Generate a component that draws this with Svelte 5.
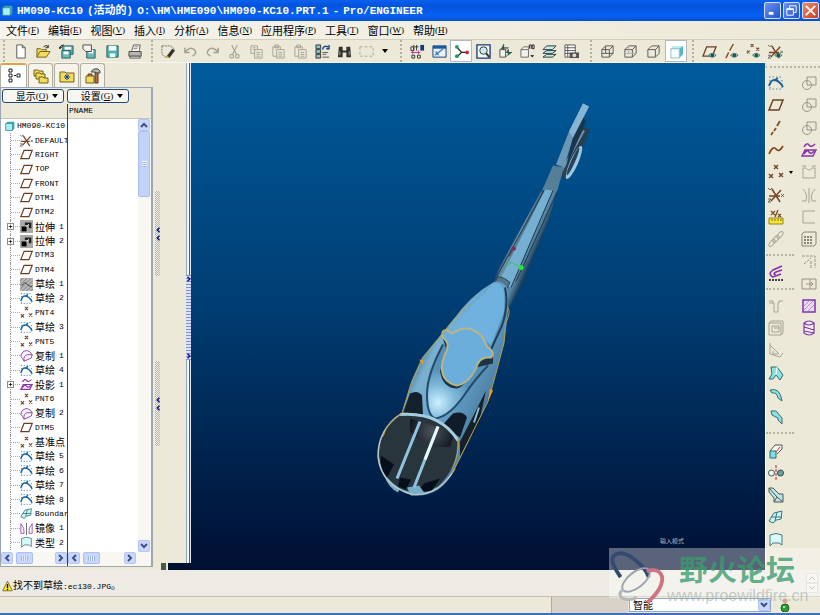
<script>
	const menus = [
		['文件', 'F'],
		['编辑', 'E'],
		['视图', 'V'],
		['插入', 'I'],
		['分析', 'A'],
		['信息', 'N'],
		['应用程序', 'P'],
		['工具', 'T'],
		['窗口', 'W'],
		['帮助', 'H']
	];

	const cube = '<path d="M2 6h8v8H2zM2 6l4-4h8l-4 4M14 2v8l-4 4" fill="none" stroke="#555"/>';
	const eye = '<path d="M7 12q4-4 8 0q-4 4-8 0z" fill="#cde" stroke="#476"/><circle cx="11" cy="12" r="2" fill="#175a4a"/>';
	const paste = '<path d="M2 3h8v10H2zM4 1h4v3H4z"/><path d="M6 6h8v9H6z" fill="#ece9d8"/><path d="M8 9h4M8 11h4M8 13h4"/>';
	const points = '<path d="M6 1l4 4M10 1L6 5M1 10l4 4M5 10l-4 4M11 9l4 4M15 9l-4 4" stroke="#7a4a28" stroke-width="1.5"/>';
	const plane = '<path d="M5 3h10l-4 10H1z" fill="none" stroke="#6d3f22" stroke-width="1.4"/>';
	const csys = '<path d="M3 14L13 3M4 2l8 13M1 9h11" stroke="#774426" stroke-width="1.5"/><path d="M0 1l2 2 2-2M13 7l3 3m0-3l-3 3M0 12h3l-3 3h3" fill="none" stroke="#555" stroke-width=".9"/>';
	const sketch = '<path d="M1 2h14M1 14h14M2 5v8M14 5v8" stroke="#4a8cc4" stroke-width="1.2" stroke-dasharray="1.500 2"/><path d="M1 11q2-6 5-6 5 0 9 7M7 5l3-2" fill="none" stroke="#15629c" stroke-width="1.8"/>';
	const merge = '<path d="M6 2h9v8H6z" fill="none"/><circle cx="6" cy="10" r="4.500" fill="none"/>';
	const project = '<path d="M3 5q3-5 5-2t6-1M4 8h11l-3 6H1zM3 12q3-5 5-2t5-1" fill="none" stroke="#8b2fa8" stroke-width="1.4"/>';
	const copy = '<path d="M1 9Q2 2 9 2q4 1 6 5l-1 4-9 4q-2-4-4-6zM5 15Q4 8 9 7l6 0" fill="#faf4fc" stroke="#8c4ba4" stroke-width="1.2"/>';
	const folder = 'fill="#f4dc58" stroke="#6d6020"';

	const icons = {
		new: '<path d="M4 1h6l3 3v11H4z" fill="#fff" stroke="#555"/><path d="M10 1v3h3" fill="none" stroke="#555"/>',
		open: `<path d="M1 14V5h4l1 1h5v3" ${folder}/><path d="M1 14l3-6h11l-4 6z" ${folder}/><path d="M8 3q3-3 5 0m0-2v3h-3" fill="none" stroke="#222"/>`,
		save: '<path d="M2 2h12v12H2z" fill="#56aeb0" stroke="#2b5c60"/><path d="M4 2h8v5H4z" fill="#f4ffff"/><path d="M5 10h6v4H5z" fill="#dff"/>',
		backup: '<path d="M4 2h11v9H4z" fill="#56aeb0" stroke="#2b5c60"/><path d="M6 3h7v3H6z" fill="#fff"/><path d="M3 7h9v8H3z" fill="#66babb" stroke="#2b5c60"/><path d="M5 8h5v3H5z" fill="#fff"/><path d="M1 5q0-4 4-4M0 3l1 2 2-2" fill="none" stroke="#111"/>',
		saveas: '<path d="M5 6h9v9H5z" fill="#66babb" stroke="#2b5c60"/><path d="M7 6h5v4H7z" fill="#fff"/><path d="M1 1h9v7H4L1 5z" fill="#f4f4ee" stroke="#444"/>',
		print: '<path d="M4 7l2-6h7l-1 6" fill="#fff" stroke="#555"/><path d="M1 8h13v5H1z" fill="#b8b6ac" stroke="#444"/><path d="M2 13h11v2H2z" fill="#eee" stroke="#555"/><path d="M7 3h4M6 5h4" stroke="#777"/>',
		redraw: '<path d="M1 2h9l4 3M1 2v9l4 3" fill="none" stroke="#666" stroke-dasharray="2 1"/><path d="M6 13l6-8 3 2-6 8z" fill="#333"/><path d="M5 15l1-3 3 2z" fill="#b7a91e"/>',
		undo: '<path d="M2 4v5h5M2 9q5-7 10-3 4 4-2 7" fill="none" stroke="#a5a295" stroke-width="1.6"/>',
		redo: '<path d="M14 4v5H9M14 9Q9 2 4 6q-4 4 2 7" fill="none" stroke="#a5a295" stroke-width="1.6"/>',
		cut: '<g fill="none" stroke="#a5a295" stroke-width="1.2"><path d="M5 1l5 10M11 1L6 11"/><circle cx="5" cy="13" r="2"/><circle cx="11" cy="13" r="2"/></g>',
		copyclip: '<g fill="none" stroke="#a5a295"><path d="M2 2h7v8H2zM4 4h3M4 6h3"/><path d="M6 6h8v9H6z" fill="#ece9d8"/><path d="M8 9h4M8 11h4M8 13h4"/></g>',
		paste: `<g fill="none" stroke="#a5a295">${paste}</g>`,
		regen: '<path d="M1 1h5v4H1zM1 6h5v4H1zM1 11h5v4H1z" fill="#8cc6c8" stroke="#333"/><path d="M8 6q1-5 6-3m1-2v4h-3" fill="none" stroke="#1b4690" stroke-width="1.5"/><path d="M8 9h6M8 11h4M8 14h7" stroke="#555"/>',
		find: '<path d="M2 3h4v4h4V3h4l1 11h-5V9H6v5H1z" fill="#30302c"/><path d="M3 8v4M13 8v4" stroke="#aaa"/>',
		select: '<path d="M1 3h14v10H1z" fill="none" stroke="#aaa79b" stroke-dasharray="3 2"/>',
		dims: '<path d="M1 3h3v4H1zM4 1v6M7 1v6M5 3h4" fill="none" stroke="#333"/><path d="M11 1h4v6h-4z" fill="#123a78"/><path d="M1 9h10M3 7v4M9 7v4" stroke="#b33a8a"/><path d="M2 12h3v3H2zM8 12h3v3H8z" fill="none" stroke="#333"/>',
		sketchview: '<path d="M1 2h14v12H1z" fill="#e8f2fb" stroke="#123a78"/><path d="M1 2h14v3H1z" fill="#1d55a8"/><path d="M3 12l9-7M4 8l3 4" stroke="#3f7bb8" stroke-width="1.4"/>',
		spin: '<path d="M3 3l5 6-5 5M8 9h6" fill="none" stroke="#222" stroke-width="1.4"/><circle cx="3" cy="3" r="2" fill="#2a9c58"/><circle cx="3" cy="13" r="2" fill="#2a9c58"/><circle cx="14" cy="9" r="2" fill="#c22840"/>',
		zoom: '<path d="M1 1h14v14H1z" fill="#f8f8f8" stroke="#123a78" stroke-width="1.4"/><circle cx="8" cy="7" r="4" fill="#cde8ef" stroke="#333"/><path d="M11 10l3 4" stroke="#333" stroke-width="2"/>',
		orient: '<path d="M2 6h6v8H2zM2 6l3-2h6l-3 2M8 14l3-3" fill="#f3f3ea" stroke="#555"/><path d="M6 0v6l-2-2M6 6l2-2M15 9H9l2-3v6" fill="#1d5a4a" stroke="#1d5a4a"/>',
		views: '<path d="M1 6h8v8H1zM1 6l3-3h6L9 6" fill="#f3f3ea" stroke="#666"/><path d="M10 5V1h2v4M13 1h2v4h-2z" fill="none" stroke="#222"/><path d="M11 12h4l-2 2z"/>',
		layers: '<g fill="#baf0ee" stroke="#333"><path d="M1 14l4-3h10l-4 3z"/><path d="M1 10l4-3h10l-4 3z"/><path d="M1 6l4-4h10l-4 4z"/></g>',
		camera: '<path d="M1 1h11v13H1zM1 4h11M1 7h11M1 10h11M4 1v13" fill="#fff" stroke="#555"/><path d="M6 9h10v6H6z" fill="#555"/><circle cx="11" cy="12" r="2" fill="#ddd"/>',
		wire: cube + '<path d="M6 2v8H2M6 10h8" fill="none" stroke="#555"/>',
		hidden: cube + '<path d="M6 2v8H2M6 10h8" fill="none" stroke="#aaa"/>',
		nohidden: cube,
		shade: '<path d="M2 5l3-3h10v9l-4 4V5z" fill="#55b6c4"/><path d="M2 5l3-3h10l-4 3z" fill="#b9eef2"/><path d="M2 5h9v10H2z" fill="#f4ffff" stroke="#99b7bd"/>',
		planeeye: plane + eye,
		axiseye: '<path d="M10 0L6 7M5 9l-3 6" stroke="#8a4a22" stroke-width="1.5"/>' + eye,
		pointeye: '<path d="M5 0l3 3M8 0L5 3M1 7l3 3M4 7l-3 3M11 4l3 3M14 4l-3 3" stroke="#7a4a28" stroke-width="1.3"/>' + eye,
		csyseye: csys + eye,

		model: '<path d="M1 4l3-3h11v11l-3 3H1z" fill="#37a9b5"/><path d="M1 4h11v11H1z" fill="#9ff3f4" stroke="#40777c"/>',
		plane,
		csys,
		points,
		sketch,
		hiddensketch: '<path d="M0 0h16v16H0z" fill="#b8b8b8"/><path d="M0 4l4-4M0 9l9-9M0 14L14 0M3 16L16 3M8 16l8-8M13 16l3-3" stroke="#777"/><path d="M2 10q4-6 6-3t7 4" fill="none" stroke="#333"/>',
		extrude: '<path d="M0 0h16v16H0z" fill="#a9a9a5"/><path d="M2 8h6v6H2z" fill="#000"/><path d="M6 3h8v7h-3V6H6z" fill="#222"/><path d="M8 8l3-3" stroke="#fff"/>',
		copy,
		project,
		boundary: '<path d="M1 12L6 4l8-2-1 8q-5 0-8 4zM3 8h11M9 3L7 12" fill="#c9f5f3" stroke="#37787c"/>',
		mirror: '<path d="M1 2q5 5 4 12H1zM15 2q-5 5-4 12h4z" fill="#fbf3fb" stroke="#8c4ba4"/><path d="M8 1v15" stroke="#555"/>',
		style: '<path d="M2 3q6-3 12 0v10l-3-2H5l-3 3z" fill="#d7fafa" stroke="#4d7a80"/>',

		axis: '<path d="M12 1L9 6M8 8l-2 3M5 12l-2 3" stroke="#8a4a22" stroke-width="1.8"/>',
		curve: '<path d="M1 12q4-9 7-5t7-3" fill="none" stroke="#844016" stroke-width="1.6"/>',
		analysis: '<path d="M3 2l4 4m0-4L3 6M10 1L7 8M10 5l3 3m0-3l-3 3" stroke="#7a4a28" stroke-width="1.3"/><path d="M1 9h14v6H1z" fill="#f4e43c" stroke="#97861c"/><path d="M4 10v2M7 10v2M10 10v2M13 10v2" stroke="#786b10"/>',
		chain: '<g fill="none" stroke="#a5a295"><ellipse cx="4" cy="12" rx="2" ry="4" transform="rotate(40 4 12)"/><ellipse cx="8" cy="8" rx="2" ry="4" transform="rotate(40 8 8)"/><ellipse cx="12" cy="4" rx="2" ry="4" transform="rotate(40 12 4)"/></g>',
		magnet: '<path d="M14 1L5 5Q-1 9 5 12l8-3M14 5L8 7q-4 2 0 3" fill="none" stroke="#8b2fa8" stroke-width="1.5"/><path d="M1 15h14" stroke="#444" stroke-width="2" stroke-dasharray="2 1"/>',
		hole: '<path d="M1 3h4v2h1v9h4V5h1V3h4M1 5h4" fill="none" stroke="#a5a295"/>',
		shell: '<g fill="none" stroke="#a5a295"><path d="M1 3h12v12H1zM4 6h7v6H4zM6 8h5M1 3l2-2h12v12l-2 2"/></g>',
		rib: '<path d="M2 1v11l10 3M2 3l9 9M5 9v3h5M12 15l3-4" fill="none" stroke="#a5a295"/>',
		draft: '<path d="M3 2h6l6 8-3 5-4-5-3 4H1l3-5z" fill="#8be4e4" stroke="#376b70"/><path d="M9 2L8 10" stroke="#fff" fill="none"/>',
		round: '<path d="M2 3q10-3 12 11l-4-3Q9 5 4 6z" fill="#8be4e4" stroke="#376b70"/>',
		chamfer: '<path d="M3 2h5l6 7v6l-4-4V9L4 6z" fill="#8be4e4" stroke="#376b70"/>',
		extrudetool: '<path d="M2 8l5-6h7v4l-5 5" fill="#f5f5ee" stroke="#555"/><path d="M2 8h6v7H2z" fill="#7fe0e4" stroke="#236c74"/><path d="M8 9l4-5" stroke="#c33"/>',
		revolve: '<circle cx="3.500" cy="8" r="3" fill="#e2f8f6" stroke="#555"/><circle cx="12.500" cy="8" r="3" fill="#5da79f" stroke="#444"/><path d="M8 0v16" stroke="#c22" stroke-dasharray="3 1"/>',
		sweep: '<path d="M1 1h4l6 6h4v8H6v-4L1 5z" fill="#bbe6e8" stroke="#555"/><path d="M1 1l8 9M6 15l3-5 6 5" stroke="#555" fill="none"/>',
		merge: `<g stroke="#98958a">${merge}</g>`,
		trim: '<path d="M2 4h3q3 4 6 0h3v10H2zM1 2h4M11 2h4" fill="none" stroke="#a5a295"/>',
		mirroroff: '<path d="M2 2q5 5 3 12H1M14 2q-5 5-3 12h4M8 1v15" fill="none" stroke="#a5a295"/>',
		corner: '<path d="M14 2H2v12h12" fill="none" stroke="#a5a295"/>',
		pattern: '<path d="M1 3l2-2h12v12l-2 2H1z" fill="none" stroke="#888579"/><path d="M4 5v9M7 5v9M10 5v9" stroke="#888579" stroke-width="2" stroke-dasharray="2 1"/>',
		extend: '<path d="M1 3h13v12M10 15V8M3 11l7-6" fill="none" stroke="#98958a" stroke-dasharray="3 1"/>',
		offset: '<path d="M1 3h14v10H1zM9 3v10M5 8h7l-2-2m2 2l-2 2" fill="none" stroke="#98958a"/>',
		fill: '<path d="M2 2h12v12H2z" fill="#eadcf5" stroke="#7c35a6" stroke-width="1.5"/><path d="M3 8l5-5M3 12l9-9M7 13l6-6" stroke="#b48bd0"/>',
		helix: '<path d="M3 3q5-4 10 0v10q-5 4-10 0zM3 3q5 4 10 0M3 7l10 3M3 11l10 2" fill="#f5effa" stroke="#7c35a6" stroke-width="1.2"/>',

		tree: '<path d="M3 1h3v3H3zM3 6h3v3H3zM3 11h3v3H3zM11 6h3v3h-3z" fill="#fff" stroke="#222"/><path d="M8 7.500h2" stroke="#222"/>',
		layertab: `<path d="M1 2h4l1 1h4v5H1z" ${folder}/><path d="M3 5h4l1 1h4v5H3z" ${folder}/><path d="M6 9h4l1 1h4v5H6z" ${folder}/>`,
		favtab: `<path d="M1 4h5l1 1h8v9H1z" ${folder}/><path d="M8 6v6M5 9h6M6 7l4 4M10 7l-4 4" stroke="#1c46a0"/>`,
		tooltab: `<path d="M1 8h8v7H1z" ${folder}/><path d="M3 8V6h4v2M10 4h3v11h-3z" fill="#b5703a" stroke="#5d3820"/><path d="M6 4q2-4 7-3l2 2v2h-3l-2-1z" fill="#bbb" stroke="#444"/>`
	};

	const toolbar = [
		{ wide: true, tools: ['new', 'open', 'backup', 'saveas', 'save', 'print'] },
		{ tools: ['redraw', 'undo', 'redo', 'cut', 'copyclip', 'paste', 'paste', 'regen', 'find', 'select'], menu: true },
		{ tools: ['dims', 'sketchview', 'spin', 'zoom', 'orient', 'views', 'layers', 'camera'] },
		{ wide: true, tools: ['wire', 'hidden', 'nohidden', 'shade'] },
		{ tools: ['planeeye', 'axiseye', 'pointeye', 'csyseye'] }
	];

	const featureTools = [
		['sketch', 'plane', 'axis', 'curve', 'points', 'csys', 'analysis', 'chain'],
		['magnet'],
		['hole', 'shell', 'rib', 'draft', 'round', 'chamfer'],
		['extrudetool', 'revolve', 'sweep', 'boundary', 'style']
	];
	const editTools = ['merge', 'merge', 'merge', 'project', 'trim', 'mirroroff', 'corner', 'pattern', 'extend', 'offset', 'fill', 'helix'];

	// icon, Chinese name, Latin part or number, has children
	const features = [
		['csys', '', 'DEFAULT'],
		['plane', '', 'RIGHT'],
		['plane', '', 'TOP'],
		['plane', '', 'FRONT'],
		['plane', '', 'DTM1'],
		['plane', '', 'DTM2'],
		['extrude', '拉伸', '1', true],
		['extrude', '拉伸', '2', true],
		['plane', '', 'DTM3'],
		['plane', '', 'DTM4'],
		['hiddensketch', '草绘', '1'],
		['sketch', '草绘', '2'],
		['points', '', 'PNT4'],
		['sketch', '草绘', '3'],
		['points', '', 'PNT5'],
		['copy', '复制', '1'],
		['sketch', '草绘', '4'],
		['project', '投影', '1', true],
		['points', '', 'PNT6'],
		['copy', '复制', '2'],
		['plane', '', 'DTM5'],
		['points', '基准点', ''],
		['sketch', '草绘', '5'],
		['sketch', '草绘', '6'],
		['sketch', '草绘', '7'],
		['sketch', '草绘', '8'],
		['boundary', '', 'Boundar'],
		['mirror', '镜像', '1'],
		['style', '类型', '2']
	];

	const tabs = ['tree', 'layertab', 'favtab', 'tooltab'];
	const pressed = ['spin', 'shade'];

	let activeTab = $state('tree');
	let filter = $state('智能');
</script>

{#snippet icon(name)}
	<svg class="icon" viewBox="0 0 16 16" aria-hidden="true">{@html icons[name]}</svg>
{/snippet}

{#snippet arrow(dir)}
	<svg class="arrow {dir}" viewBox="0 0 8 8" aria-hidden="true"><path d="M1 6l3-3 3 3" /></svg>
{/snippet}

<div class="app">
	<header class="titlebar">
		{@render icon('model')}
		<h1><span>HM090-KC10</span><span>(活动的)</span><span>O:\HM\HME090\HM090-KC10.PRT.1</span><span>-</span><span>Pro/ENGINEER</span></h1>
		<div class="window-buttons">
			<button aria-label="Minimize"><svg viewBox="0 0 16 16"><path d="M4 11h5" stroke-width="3" /></svg></button>
			<button aria-label="Restore"><svg viewBox="0 0 16 16"><path d="M6 6V3h7v7h-3M3 6h7v7H3zM3 7h7" /></svg></button>
			<button class="close" aria-label="Close"><svg viewBox="0 0 16 16"><path d="M3 3l10 10M13 3L3 13" stroke-width="2" /></svg></button>
		</div>
	</header>

	<nav class="menubar">
		{#each menus as [label, key]}
			<button>{label}<small>(<u>{key}</u>)</small></button>
		{/each}
	</nav>

	<div class="toolbar">
		{#each toolbar as group}
			<div class="group" class:wide={group.wide}>
				{#each group.tools as tool}
					<button class:pressed={pressed.includes(tool)} aria-label={tool}>{@render icon(tool)}</button>
				{/each}
				{#if group.menu}<button class="more" aria-label="more"><i class="caret"></i></button>{/if}
			</div>
		{/each}
	</div>

	<main>
		<aside>
			<div class="tabs">
				{#each tabs as tab}
					<button class:active={activeTab === tab} aria-label={tab} onclick={() => (activeTab = tab)}>{@render icon(tab)}</button>
				{/each}
			</div>
			<div class="panel">
				<div class="actions">
					<button>显示<small>(<u>O</u>)</small><i class="caret"></i></button>
					<button>设置<small>(<u>G</u>)</small><i class="caret"></i></button>
				</div>
				<div class="columns">
					<div class="names">
						<div class="head"></div>
						<ul class="tree">
							<li class="root">{@render icon('model')}<span>HM090-KC10</span></li>
							{#each features as [kind, name, suffix, open]}
								<li>
									<span class="branch">{#if open}<button aria-label="expand {name} {suffix}"><svg viewBox="0 0 7 7"><path d="M1 3.500h5M3.500 1v5" stroke="#000" /></svg></button>{/if}</span>
									{@render icon(kind)}
									{#if name}<span class="cjk">{name}</span>{/if}
									{#if suffix}<span class:number={name}>{suffix}</span>{/if}
								</li>
							{/each}
						</ul>
						<div class="hscroll">
							<button aria-label="left">{@render arrow('left')}</button>
							<span class="thumb"></span>
							<button aria-label="right">{@render arrow('right')}</button>
						</div>
					</div>
					<div class="values">
						<div class="head">PNAME</div>
						<div class="body">
							<div class="vscroll">
								<button aria-label="up">{@render arrow('up')}</button>
								<span class="thumb"></span>
								<button aria-label="down">{@render arrow('down')}</button>
							</div>
						</div>
						<div class="hscroll short">
							<button aria-label="left">{@render arrow('left')}</button>
							<span class="thumb"></span>
							<button aria-label="right">{@render arrow('right')}</button>
						</div>
					</div>
				</div>
			</div>
		</aside>

		<div class="gutter">
			<div class="rails">
				<div class="handles">
					<span class="handle">{@render arrow('left')}{@render arrow('left')}</span>
					<span class="handle">{@render arrow('left')}{@render arrow('left')}</span>
				</div>
				<div class="splitter">
					<span class="sash">{@render arrow('right')}{@render arrow('right')}</span>
				</div>
			</div>
			<div class="foot"><i></i><b></b></div>
		</div>

		<div class="viewport">
			<svg viewBox="191 63 574 508" preserveAspectRatio="xMidYMid slice" role="img" aria-label="HM090-KC10">
				<defs>
					<linearGradient id="body" gradientUnits="userSpaceOnUse" x1="402" y1="370" x2="500" y2="415">
						<stop offset="0" stop-color="#315d7c" />
						<stop offset=".2" stop-color="#7bb1d0" />
						<stop offset=".5" stop-color="#65a3cb" />
						<stop offset=".8" stop-color="#5185a9" />
						<stop offset="1" stop-color="#20435f" />
					</linearGradient>
					<linearGradient id="tube" gradientUnits="userSpaceOnUse" x1="513" y1="230" x2="540" y2="242">
						<stop offset="0" stop-color="#234a66" />
						<stop offset=".25" stop-color="#6b91a8" />
						<stop offset=".45" stop-color="#31566f" />
						<stop offset=".75" stop-color="#5b8aa9" />
						<stop offset="1" stop-color="#1d3e59" />
					</linearGradient>
					<radialGradient id="shine" gradientUnits="userSpaceOnUse" cx="438" cy="403" r="34">
						<stop offset="0" stop-color="#cdefff" />
						<stop offset=".5" stop-color="#7fb9da" />
						<stop offset="1" stop-color="#5690b6" />
					</radialGradient>
					<radialGradient id="glass" gradientUnits="userSpaceOnUse" cx="432" cy="432" r="24">
						<stop offset="0" stop-color="#4d545c" />
						<stop offset="1" stop-color="#0e151f" />
					</radialGradient>
				</defs>

				<!-- hook and second arm -->
				<path d="M583 128L590 129L585 142L565 180L560 175L578 138Z" fill="#293f50" />
				<path d="M584 131L562 171" stroke="#7193a8" stroke-width="2" />
				<ellipse cx="574" cy="163" rx="4" ry="18" transform="rotate(24 574 163)" fill="#9bc7df" />
				<ellipse cx="573" cy="162" rx="2" ry="15" transform="rotate(24 573 162)" fill="#25435a" />
				<path d="M573 137L583 117L586 122L566 168Z" fill="#19364e" />
				<path d="M583 104L589 107L573 138L564 168L556 165L569 132Z" fill="#6b98b4" />
				<path d="M583 104L589 107L573 138L569 132Z" fill="#84b6d3" />

				<!-- handle -->
				<path d="M541 192L557 190L549 220L521 287L508 310L490 292L499 269Z" fill="url(#tube)" />
				<path d="M553 166L564 168L557 192L542 191Z" fill="#557f97" />
				<path d="M545 190L553 191L511 288L498 284Z" fill="#75afd2" />
				<path d="M553 191L511 288M557 193L516 282M544 191L494 282" stroke="#1c364a" fill="none" />
				<path d="M498 277Q505 278 510 283L507 289L495 283Z" fill="#53788e" stroke="#294559" />

				<!-- body -->
				<path d="M493 283Q503 280 508 290L508 312L504 345L497 369L490 397L470 440L453 473Q440 496 418 496Q396 494 384 475Q376 462 379 447Q384 424 402 413L412 380L422 358L452 322Q470 296 493 283Z" fill="url(#body)" />
				<path d="M494 284Q503 283 504 293L504 312L491 346L483 338Q475 327 450 332L474 304Z" fill="#70b2df" />
				<path d="M505 288Q509 305 502 326L491 350" fill="none" stroke="#1d3f59" stroke-width="2" />
				<path d="M443 345Q427 375 427 395Q427 417 436 419Q450 416 464 396Q474 381 488 366L470 345Z" fill="url(#shine)" />
				<path d="M443 345Q427 375 427 395Q427 417 436 419Q450 416 464 396Q474 381 488 366" fill="none" stroke="#24496a" stroke-width="2" />
				<path d="M442 336L446 349L440 372Q443 389 457 389Q464 388 476 368L493 364V355L470 345Z" fill="#1d3444" />
				<path d="M443 332Q446 329 452 334Q465 326 474 331Q483 335 487 347Q496 353 491 358Q481 357 478 364Q470 384 457 386Q443 383 442 370Q441 363 447 350Q449 343 444 339Q441 335 443 332Z" fill="#6baedb" stroke="#b9b58a" stroke-width="2" />

				<!-- windows -->
				<path d="M410 394Q418 390 422 396L423 415L403 413Z" fill="#14202c" />
				<path d="M453 414Q463 411 467 418L460 438L442 426Z" fill="#101c29" />
				<path d="M486 391L479 423L460 458V442L474 415Z" fill="#14212d" />
				<path d="M479 408L474 423" stroke="#8fbad2" stroke-width="2" />
				<path d="M379 456Q379 430 400 415Q440 414 457 440Q459 467 438 487Q410 500 392 483Q380 473 379 456Z" fill="#29353c" />
				<path d="M410 419L440 428L454 436L450 447Q426 450 410 432Z" fill="url(#glass)" />
				<path d="M381 456L394 465L387 478Q379 468 381 456ZM400 478L411 480L406 490L398 487ZM424 484L440 479L432 491L416 494Z" fill="#050f1b" />
				<path d="M384 475Q392 485 400 489L398 493Q388 488 384 475ZM407 488L419 486L425 494L411 496Z" fill="#79aeca" />
				<path d="M420 422L397 479M438 427L414 488" fill="none" stroke="#8fc3df" stroke-width="3" />
				<path d="M438 427L425 460" stroke="#e6f8ff" stroke-width="3" />
				<path d="M400 415Q440 412 458 441" fill="none" stroke="#a4cee0" stroke-width="3" />
				<path d="M400 415Q378 430 378 457Q381 486 412 495Q439 497 455 469" fill="none" stroke="#bdc9c6" stroke-width="1.500" />

				<!-- highlighted edges -->
				<g fill="none" stroke="#ba9d42">
					<path d="M468 305L452 322L422 360L411 384L402 414Q388 420 383 437" />
					<path d="M508 308Q511 313 506 323L504 343L497 370L488 402L452 474" />
					<path d="M458 438Q460 453 452 470" />
				</g>
				<path d="M488 402L493 391L490 389ZM419 360L424 361L423 365Z" fill="#e79a28" />

				<path d="M509 257L514 248" stroke="#702246" />
				<circle cx="514" cy="249" r="2" fill="#92234b" />
				<path d="M508 262L520 267M507 267L511 263" stroke="#49ba65" />
				<circle cx="521" cy="268" r="2.500" fill="#24e931" />
				<text x="660" y="543">输入模式</text>
			</svg>
		</div>

		<div class="palette">
			<div class="feature-tools">
				{#each featureTools as group, i}
					{#if i}<hr />{/if}
					{#each group as tool}
						<button aria-label={tool}>{@render icon(tool)}{#if tool === 'points'}<i class="caret"></i>{/if}</button>
					{/each}
				{/each}
			</div>
			<div class="edit-tools">
				{#each editTools as tool}
					<button aria-label={tool}>{@render icon(tool)}</button>
				{/each}
			</div>
		</div>
	</main>

	<div class="message">
		<svg class="icon" viewBox="0 0 16 16" aria-hidden="true"><path d="M8 1l7 14H1z" fill="#ffe92c" stroke="#554d00" /><path d="M8 5v6M8 12v2" stroke="#111" stroke-width="2" /></svg>
		<p><span class="cjk">找不到草绘</span>:ec130.JPG<span class="cjk">。</span></p>
		<div class="spin">
			<button aria-label="previous message">{@render arrow('up')}</button>
			<button aria-label="next message">{@render arrow('down')}</button>
		</div>
	</div>

	<footer>
		<span class="well"></span>
		<label>
			<select bind:value={filter} aria-label="filter">
				<option>智能</option>
			</select>
			<span class="drop">{@render arrow('down')}</span>
		</label>
		<svg class="light" viewBox="0 0 10 14" aria-hidden="true"><circle cx="5" cy="3" r="2.500" fill="#dfa39a" /><circle cx="5" cy="10" r="4" fill="#2f9d35" stroke="#1b5c22" /><circle cx="4" cy="9" r="1" fill="#c8f7c0" /></svg>
	</footer>

	<div class="watermark">
		<svg viewBox="0 0 60 62" aria-hidden="true">
			<path d="M12 29Q0 12 5 7q7-6 19 2 14 10 17 20" fill="none" stroke="#344a70" stroke-width="4" />
			<ellipse cx="28" cy="32" rx="17" ry="8" transform="rotate(-38 28 32)" fill="none" stroke="#9aa3ae" stroke-width="2" />
			<path d="M39 23q13-4 16 6 1 12-15 26" fill="none" stroke="#cf7481" stroke-width="4" />
			<path d="M15 42q-7 4-1 9 8 3 15-1" fill="none" stroke="#b6b6b8" stroke-width="3" />
		</svg>
		<div>
			<strong>野火论坛</strong>
			<span>www.proewildfire.cn</span>
		</div>
	</div>
</div>

<style>
	:global(body) {
		margin: 0;
		overflow: hidden;
	}

	.app {
		position: relative;
		display: flex;
		flex-direction: column;
		height: 100vh;
		box-sizing: border-box;
		background: #ece9d8;
		border-bottom: 2px solid #3f6fc4;
		font: 8px/14px 'Liberation Mono', 'Noto Sans CJK SC', monospace;
		color: #000;
	}

	button {
		display: flex;
		align-items: center;
		justify-content: center;
		box-sizing: border-box;
		margin: 0;
		padding: 0;
		border: 0;
		background: none;
		font: inherit;
		color: inherit;
	}

	.icon {
		display: block;
		flex: none;
		width: 16px;
		height: 16px;
	}

	.arrow {
		display: block;
		flex: none;
		width: 8px;
		height: 8px;
		fill: none;
		stroke: #3b5288;
		stroke-width: 2;
	}

	.left { transform: rotate(-90deg); }
	.right { transform: rotate(90deg); }
	.down { transform: rotate(180deg); }

	.caret {
		border: 3px solid transparent;
		border-top: 4px solid #000;
		border-bottom: 0;
	}

	.cjk {
		font-family: 'Noto Sans CJK SC', sans-serif;
		font-size: 10px;
	}

	.titlebar {
		display: flex;
		align-items: center;
		flex: none;
		height: 21px;
		padding: 0 1px 0 2px;
		background: linear-gradient(#0b62ee, #0453dc 25%, #0560f4 75%, #0450d0);
	}

	.titlebar .icon {
		width: 11px;
		height: 11px;
	}

	h1 {
		display: flex;
		gap: 4px;
		flex: 1;
		margin: 0 0 0 4px;
		font-size: 11px;
		line-height: 20px;
		color: #fff;
		white-space: nowrap;
	}

	.window-buttons {
		display: flex;
		gap: 2px;
	}

	.window-buttons button {
		width: 17px;
		height: 17px;
		border: 1px solid #d4e0fa;
		border-radius: 2px;
		background: linear-gradient(135deg, #6a94f0, #2152cc);
	}

	.window-buttons .close {
		background: linear-gradient(135deg, #ee8a68, #cc3c1c);
	}

	.window-buttons svg {
		width: 15px;
		height: 15px;
		fill: none;
		stroke: #fff;
	}

	.menubar {
		display: flex;
		gap: 9px;
		flex: none;
		height: 18px;
		padding-left: 6px;
		border-bottom: 1px solid #d3cfbe;
		background: linear-gradient(90deg, #f6f4ec, #ece9d8);
	}

	.menubar button {
		font-family: 'Noto Sans CJK SC', sans-serif;
		font-size: 11px;
		white-space: nowrap;
	}

	small {
		font: 9px 'Liberation Serif', serif;
	}

	.toolbar {
		display: flex;
		flex: none;
		height: 22px;
		border-bottom: 1px solid #f8f6ee;
	}

	.group {
		display: flex;
		padding: 0 5px 0 4px;
		border-left: 2px dotted #b5b19f;
		margin-left: 3px;
	}

	.group.wide {
		gap: 1px;
		padding-right: 2px;
	}

	.group button {
		width: 22px;
		height: 22px;
	}

	.group .icon {
		width: 15px;
		height: 15px;
	}

	.group .more {
		width: 15px;
	}

	.group .pressed {
		border: 1px solid #b4b8c0;
		background: #fff;
	}

	main {
		display: flex;
		flex: 1;
		min-height: 0;
	}

	aside {
		display: flex;
		flex-direction: column;
		flex: none;
		width: 153px;
	}

	.tabs {
		display: flex;
		gap: 1px;
		flex: none;
		height: 24px;
	}

	.tabs button {
		width: 25px;
		border: 1px solid #b1b0a0;
		border-bottom: 0;
		border-radius: 3px 3px 0 0;
		background: #f5f3ea;
	}

	.tabs .active {
		width: 27px;
		border-top: 2px solid #e9a13f;
		background: #fff;
	}

	.panel {
		display: flex;
		flex-direction: column;
		flex: 1;
		min-height: 0;
		margin-bottom: 3px;
		border: 1px solid #9aa6b4;
		border-right-width: 2px;
		background: #ece9d8;
	}

	.actions {
		display: flex;
		gap: 3px;
		padding: 1px;
	}

	.actions button {
		width: 62px;
		height: 14px;
		padding-left: 8px;
		border: 1px solid #234a7c;
		border-radius: 3px;
		background: #f8f7f2;
		font-family: 'Noto Sans CJK SC', sans-serif;
		font-size: 10px;
		line-height: 12px;
		white-space: nowrap;
	}

	.actions .caret {
		margin-left: 4px;
	}

	.columns {
		display: flex;
		flex: 1;
		min-height: 0;
		background: #fff;
	}

	.names,
	.values {
		display: flex;
		flex-direction: column;
	}

	.names {
		width: 66px;
		overflow: hidden;
		border-right: 1px solid #2b4064;
	}

	.values {
		flex: 1;
	}

	.head {
		flex: none;
		height: 14px;
		padding-left: 1px;
		border-bottom: 1px solid #c9c5b4;
		background: #ece9d8;
	}

	.tree {
		display: flex;
		flex-direction: column;
		flex: 1;
		min-height: 0;
		margin: 0;
		padding: 0 0 2px;
		list-style: none;
	}

	.tree li {
		display: flex;
		align-items: center;
		flex: 1 1 0;
		min-height: 0;
		white-space: nowrap;
	}

	.tree li span {
		margin-left: 2px;
	}

	.tree .cjk {
		line-height: 12px;
	}

	.tree li .number {
		margin-left: 4px;
	}

	.tree .root {
		padding-left: 4px;
	}

	.tree .icon {
		width: 13px;
		height: 13px;
	}

	.tree .root .icon {
		width: 10px;
		height: 10px;
	}

	.tree li .branch {
		display: flex;
		align-items: center;
		flex: none;
		align-self: stretch;
		width: 9px;
		margin-left: 9px;
		border-left: 1px dotted #999;
		background: repeating-linear-gradient(90deg, #aaa 0 1px, transparent 1px 2px) center / 100% 1px no-repeat;
	}

	.branch button {
		flex: none;
		width: 7px;
		height: 7px;
		margin-left: -4px;
		border: 1px solid #8090a0;
		background: #fff;
	}

	.branch svg {
		display: block;
		width: 7px;
		height: 7px;
	}

	.hscroll {
		display: flex;
		flex: none;
		height: 14px;
		background: #f8f7f2;
	}

	.hscroll button,
	.vscroll button,
	.drop {
		width: 12px;
		height: 12px;
		flex: none;
		border: 1px solid #b4c6f0;
		border-radius: 2px;
		background: #c8d7fb;
	}

	.hscroll .thumb {
		width: 15px;
		height: 10px;
		margin: 0 auto 0 3px;
		border: 1px solid #aabff0;
		border-radius: 2px;
		background:
			repeating-linear-gradient(90deg, #9fb5ee 0 1px, #e6edff 1px 2px) center / 7px 5px no-repeat,
			#c8d7fb;
	}

	.short {
		padding-right: 15px;
	}

	.body {
		display: flex;
		justify-content: flex-end;
		flex: 1;
	}

	.vscroll {
		display: flex;
		flex-direction: column;
		width: 13px;
		background: #f8f7f2;
	}

	.vscroll .thumb {
		height: 64px;
		margin: 0 1px auto 0;
		border: 1px solid #aabff0;
		border-radius: 2px;
		background:
			repeating-linear-gradient(#fff 0 1px, #9fb5ee 1px 2px) center / 5px 6px no-repeat,
			#c3d2fb;
	}

	.gutter {
		display: flex;
		flex-direction: column;
		flex: none;
		width: 38px;
	}

	.rails {
		display: flex;
		flex: 1;
		min-height: 0;
	}

	.handles {
		display: flex;
		flex-direction: column;
		flex: 1;
		gap: 85px;
		padding: 128px 0 0 2px;
	}

	.handle,
	.sash {
		display: flex;
		flex-direction: column;
		justify-content: center;
		width: 5px;
		height: 85px;
		background: repeating-conic-gradient(#b5b1a6 0 25%, #f4f2e8 0 50%) 0 0 / 2px 2px;
	}

	.handle .arrow,
	.sash .arrow {
		width: 6px;
		stroke: #16168c;
	}

	.splitter {
		display: flex;
		width: 5px;
		padding-top: 212px;
		background: linear-gradient(90deg, #8fa7c4 0 1px, #f5f5f2 1px 3px, #2a64a0 3px 4px, #dfe7ef 4px);
	}

	.sash {
		justify-content: space-between;
		background: repeating-linear-gradient(#8491cc 0 1px, #dbe2f8 1px 3px);
	}

	.foot {
		display: flex;
		gap: 2px;
		height: 7px;
		padding-left: 8px;
	}

	.foot i {
		width: 5px;
		background: #4a5a44;
	}

	.foot b {
		flex: 1;
		background: #000f30;
	}

	.viewport {
		flex: 1;
		min-width: 0;
		background: linear-gradient(#005b9c, #003d72 48%, #000f32);
	}

	.viewport svg {
		display: block;
		width: 100%;
		height: 100%;
	}

	.viewport text {
		font: 6px 'Noto Sans CJK SC', sans-serif;
		fill: #b4bcc8;
	}

	.palette {
		display: flex;
		flex: none;
		width: 54px;
		margin-top: 3px;
		padding: 4px 0 19px;
		border-top: 2px dotted #bdb9a8;
		border-left: 1px solid #fff;
	}

	.feature-tools,
	.edit-tools {
		display: flex;
		flex-direction: column;
	}

	.feature-tools {
		width: 30px;
	}

	.edit-tools {
		width: 20px;
		margin-left: 3px;
	}

	.edit-tools::after {
		content: '';
		flex: 19 1 0;
	}

	.palette button {
		flex: 2 1 0;
		min-height: 0;
		justify-content: flex-start;
		padding-left: 2px;
	}

	.palette .caret {
		border-width: 3px 2px 0;
		margin-left: 5px;
	}

	hr {
		width: 28px;
		height: 0;
		margin: 4px 0 5px;
		border: 0;
		border-top: 2px dotted #b5b19f;
	}

	.message {
		display: flex;
		align-items: center;
		flex: none;
		height: 26px;
		padding: 0 2px;
		border-bottom: 1px solid #c5c1b0;
		background: #edebe4;
	}

	.message .icon {
		width: 11px;
		height: 12px;
		margin-top: 6px;
	}

	.message p {
		flex: 1;
		margin: 6px 0 0;
	}

	.spin {
		width: 12px;
	}

	.spin button {
		width: 12px;
		height: 10px;
		border: 1px solid #dedbd0;
		background: #f6f5f0;
	}

	.spin .arrow {
		stroke: #aaa;
		stroke-width: 1;
	}

	footer {
		display: flex;
		align-items: center;
		justify-content: flex-end;
		flex: none;
		height: 16px;
		padding-right: 30px;
	}

	.well {
		align-self: stretch;
		width: 76px;
		border-left: 1px solid #aaa;
		background: #d9d2c8;
	}

	label {
		position: relative;
		display: flex;
		margin: 0 9px 0 1px;
	}

	select {
		width: 142px;
		height: 14px;
		padding: 0 0 0 3px;
		border: 1px solid #8fa8c8;
		border-radius: 0;
		appearance: none;
		background: #fff;
		font: 10px/12px 'Noto Sans CJK SC', sans-serif;
		color: #000;
	}

	.drop {
		position: absolute;
		top: 1px;
		right: 1px;
		display: flex;
		align-items: center;
		justify-content: center;
		box-sizing: border-box;
		pointer-events: none;
	}

	.light {
		width: 10px;
		height: 14px;
	}

	.watermark {
		position: absolute;
		right: 0;
		bottom: 15px;
		display: flex;
		width: 211px;
		height: 50px;
		background: rgba(255, 255, 255, 0.35);
		pointer-events: none;
	}

	.watermark svg {
		flex: none;
		width: 58px;
		height: 62px;
	}

	.watermark strong,
	.watermark span {
		display: block;
		white-space: nowrap;
	}

	.watermark strong {
		padding: 3px 0 0 12px;
		font: bold 29px/34px 'Noto Sans CJK SC', sans-serif;
		color: rgba(60, 155, 110, 0.8);
	}

	.watermark span {
		font: 16px/22px 'Liberation Sans', sans-serif;
		color: rgba(160, 175, 170, 0.6);
	}
</style>
